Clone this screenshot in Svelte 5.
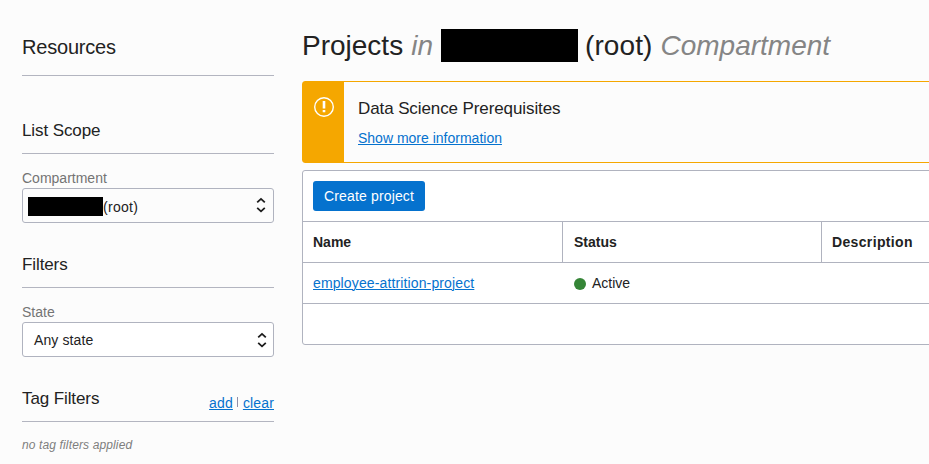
<script>
  const columns = ['Name', 'Status', 'Description'];
  const projects = [{ name: 'employee-attrition-project', status: 'Active', description: '' }];
</script>

{#snippet chevrons()}
  <svg class="chevrons" width="10" height="16" viewBox="0 0 10 16" aria-hidden="true">
    <path d="M1.2 5.4 5 1.9 8.8 5.4M1.2 10.8 5 14.3 8.8 10.8" />
  </svg>
{/snippet}

<div class="page">
  <aside>
    <h2 class="resources">Resources</h2>

    <h3 class="scope">List Scope</h3>
    <div class="label">Compartment</div>
    <div class="select compartment">
      <span class="redacted small"></span><span class="value">(root)</span>
      {@render chevrons()}
    </div>

    <h3>Filters</h3>
    <div class="label">State</div>
    <div class="select state">
      <span class="value">Any state</span>
      {@render chevrons()}
    </div>

    <h3 class="tags">
      <span>Tag Filters</span>
      <span class="actions"><a href="#add">add</a><i></i><a href="#clear">clear</a></span>
    </h3>
    <p class="empty">no tag filters applied</p>
  </aside>

  <main>
    <h1>
      <span>Projects</span><em>in</em><span class="redacted large"></span><span class="root">(root)</span><em>Compartment</em>
    </h1>

    <section class="notice">
      <div class="stripe">
        <svg width="22" height="22" viewBox="0 0 22 22" aria-hidden="true">
          <circle cx="11" cy="11" r="9.3" />
          <path d="M11 5v7.4M11 14v2.2" />
        </svg>
      </div>
      <div class="message">
        <div class="title">Data Science Prerequisites</div>
        <a href="#more">Show more information</a>
      </div>
    </section>

    <section class="panel">
      <div class="toolbar"><button>Create project</button></div>
      <div class="row head">
        {#each columns as column}<div class="cell">{column}</div>{/each}
      </div>
      {#each projects as project}
        <div class="row">
          <div class="cell"><a href="#project">{project.name}</a></div>
          <div class="cell"><span class="dot"></span>{project.status}</div>
          <div class="cell">{project.description}</div>
        </div>
      {/each}
      <div class="footer"></div>
    </section>
  </main>
</div>

<style>
  :global(body) {
    background: #fcfcfc;
    overflow: hidden;
  }
  .page {
    display: flex;
    box-sizing: border-box;
    width: 929px;
    height: 464px;
    padding-left: 22px;
    gap: 28px;
    overflow: hidden;
    font: 14px/20px 'Liberation Sans', Arial, sans-serif;
    color: #222;
  }
  aside {
    flex: 0 0 252px;
  }
  main {
    flex: 0 0 660px;
  }
  h1, h2, h3, p {
    margin: 0;
    font-weight: 400;
  }
  a {
    color: #0572ce;
    text-decoration: underline;
    text-underline-offset: 1px;
    text-decoration-thickness: 1px;
  }
  .resources {
    box-sizing: border-box;
    height: 76px;
    padding-top: 35px;
    border-bottom: 1px solid #b3b5c0;
    font-size: 20px;
    line-height: 24px;
    letter-spacing: -0.2px;
  }
  h3 {
    box-sizing: border-box;
    height: 65px;
    padding-top: 32px;
    border-bottom: 1px solid #b3b5c0;
    font-size: 17px;
    line-height: 20px;
    letter-spacing: -0.1px;
  }
  .scope {
    height: 78px;
    padding-top: 45px;
  }
  .label {
    height: 34px;
    padding-top: 14px;
    box-sizing: border-box;
    color: #747474;
    font-size: 14px;
  }
  .select {
    display: flex;
    align-items: center;
    box-sizing: border-box;
    height: 35px;
    border: 1px solid #b0b3bf;
    border-radius: 3px;
    background: #fff;
  }
  .compartment {
    padding: 0 7px 0 5px;
    background: #fcfcfc;
  }
  .compartment .value {
    padding-top: 2px;
    letter-spacing: 0.3px;
  }
  .compartment .chevrons {
    margin-top: -2px;
  }
  .state {
    padding: 0 6px 0 11px;
  }
  .state .value {
    letter-spacing: 0.1px;
  }
  .state .chevrons {
    margin-top: 1px;
  }
  .chevrons {
    margin-left: auto;
    fill: none;
    stroke: #1c1c1c;
    stroke-width: 1.8;
  }
  .redacted {
    background: #000;
  }
  .small {
    width: 75px;
    height: 19px;
    margin-top: 2px;
  }
  .large {
    width: 137px;
    height: 33px;
    margin: 0 7px 0 8px;
  }
  .tags {
    display: flex;
    justify-content: space-between;
  }
  .actions {
    display: flex;
    padding-top: 4px;
    font-size: 14px;
    letter-spacing: 0.15px;
  }
  .actions i {
    width: 1px;
    height: 10px;
    margin: 4px 5px 0 4px;
    background: #8f8fa8;
  }
  .empty {
    padding-top: 14px;
    line-height: 18px;
    color: #7e7e7e;
    font-size: 12px;
    font-style: italic;
    letter-spacing: 0.13px;
  }
  h1 {
    display: flex;
    align-items: center;
    height: 33px;
    padding-top: 29px;
    font-size: 28px;
    line-height: 33px;
    white-space: nowrap;
  }
  em {
    color: #858585;
  }
  h1 em {
    margin-left: 8px;
  }
  .root {
    letter-spacing: 0.1px;
  }
  .notice {
    display: flex;
    box-sizing: border-box;
    height: 82px;
    margin-top: 19px;
    border: 1px solid #f5a700;
    border-radius: 3px;
    background: #fcfcfc;
  }
  .stripe {
    flex: 0 0 41px;
    background: #f5a700;
  }
  .stripe svg {
    display: block;
    margin: 14px 0 0 10px;
    fill: none;
    stroke: #fff;
    stroke-width: 1.4;
  }
  .stripe path {
    stroke-width: 2.6;
  }
  .message {
    padding: 17px 14px 0;
  }
  .title {
    margin-bottom: 9px;
    font-size: 17px;
    line-height: 20px;
    letter-spacing: -0.1px;
  }
  .panel {
    box-sizing: border-box;
    height: 175px;
    margin-top: 7px;
    border: 1px solid #b0b3bf;
    border-radius: 3px;
    background: #fff;
  }
  .toolbar {
    height: 40px;
    padding: 10px 10px 0;
  }
  button {
    width: 112px;
    height: 30px;
    padding: 0;
    border: 0;
    border-radius: 3px;
    background: #0572ce;
    color: #fff;
    font: inherit;
    letter-spacing: 0.15px;
  }
  .row {
    display: flex;
    box-sizing: border-box;
    height: 41px;
    border-top: 1px solid #b0b3bf;
  }
  .cell {
    display: flex;
    flex: 0 0 259px;
    align-items: center;
    box-sizing: border-box;
    padding-left: 10px;
  }
  .cell:first-child {
    flex-basis: 260px;
  }
  .cell a {
    letter-spacing: 0.13px;
  }
  .cell + .cell {
    padding-left: 11px;
  }
  .cell:nth-child(3) {
    padding-left: 10px;
    letter-spacing: 0.35px;
  }
  .head {
    font-weight: 700;
  }
  .head .cell {
    border-right: 1px solid #b0b3bf;
  }
  .dot {
    width: 12px;
    height: 12px;
    margin: 2px 6px 0 0;
    border-radius: 50%;
    background: #358537;
  }
  .footer {
    border-top: 1px solid #b0b3bf;
  }
</style>
